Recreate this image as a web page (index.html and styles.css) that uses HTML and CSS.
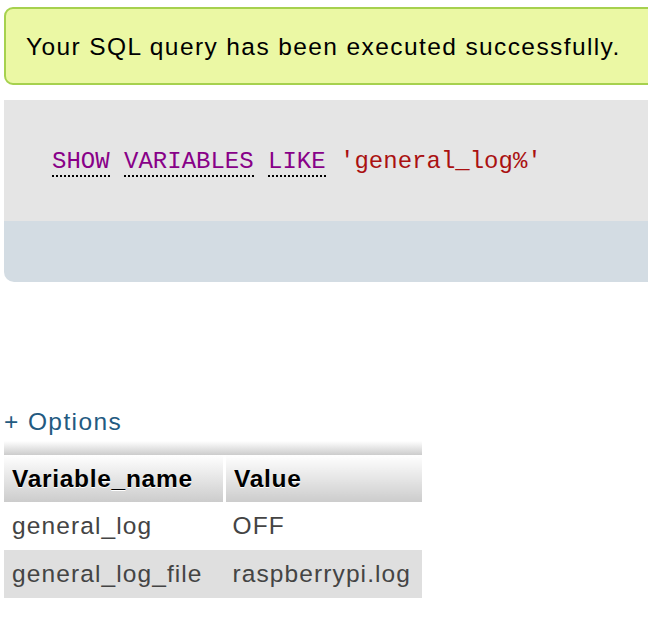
FILE: index.html
```html
<!DOCTYPE html>
<html>
<head>
<meta charset="utf-8">
<link rel="stylesheet" href="styles.css">
</head>
<body>
<div class="page">
  <div class="success">Your SQL query has been executed successfully.</div>
  <div class="sqlbox">
    <div class="code"><span class="kw">SHOW</span> <span class="kw">VARIABLES</span> <span class="kw">LIKE</span> <span class="str">'general_log%'</span></div>
    <div class="tools"></div>
  </div>
  <div class="options"><a href="#">+ Options</a></div>
  <div class="tablewrap">
    <div class="band"></div>
    <table class="data">
      <thead>
        <tr><th class="c1">Variable_name</th><th class="c2">Value</th></tr>
      </thead>
      <tbody>
        <tr class="odd"><td>general_log</td><td>OFF</td></tr>
        <tr class="even"><td>general_log_file</td><td>raspberrypi.log</td></tr>
      </tbody>
    </table>
  </div>
</div>
</body>
</html>
```
FILE: styles.css
```css
html, body {
  margin: 0;
  padding: 0;
  background: #fff;
  overflow: hidden;
}
.page {
  padding: 7px 0 0 4px;
  font-family: "Liberation Sans", Arial, sans-serif;
  width: 700px;
}
.success {
  box-sizing: border-box;
  height: 78px;
  border: 2px solid #a6d14e;
  border-radius: 9px;
  background: #ebf8a4;
  color: #000;
  font-size: 24.5px;
  letter-spacing: 1.4px;
  line-height: 76px;
  padding-left: 20px;
}
.sqlbox {
  margin-top: 15px;
  border-radius: 0 0 10px 10px;
  overflow: hidden;
}
.code {
  background: #e5e5e5;
  height: 121px;
  box-sizing: border-box;
  padding: 47px 0 0 48px;
  font-family: "Liberation Mono", "Courier New", monospace;
  font-size: 24px;
  line-height: 30px;
  white-space: pre;
}
.kw {
  color: #880088;
  border-bottom: 2px dotted #000;
}
.str {
  color: #aa1111;
}
.tools {
  background: #d3dce3;
  height: 61px;
}
.options {
  margin-top: 125px;
  font-size: 24.5px;
  letter-spacing: 1.4px;
  line-height: 30px;
}
.options a {
  color: #235a81;
  text-decoration: none;
}
.tablewrap {
  width: 418px;
  margin-top: 4px;
}
.band {
  height: 14px;
  background: linear-gradient(#ffffff, #cccccc);
}
.data {
  border-collapse: collapse;
  width: 418px;
  font-size: 24.5px;
}
.data th {
  height: 47px;
  text-align: left;
  padding: 0 0 0 8px;
  color: #000;
  font-weight: bold;
  letter-spacing: 0.7px;
  text-shadow: 0 1px 0 #fff;
  background: linear-gradient(#ffffff, #cccccc);
}
.data th.c1 {
  width: 211px;
  border-right: 3px solid #fff;
}
.data td {
  height: 48px;
  padding: 0 0 0 8px;
  color: #444;
  letter-spacing: 1.1px;
}
.data tr.even td {
  background: #dfdfdf;
}
```
